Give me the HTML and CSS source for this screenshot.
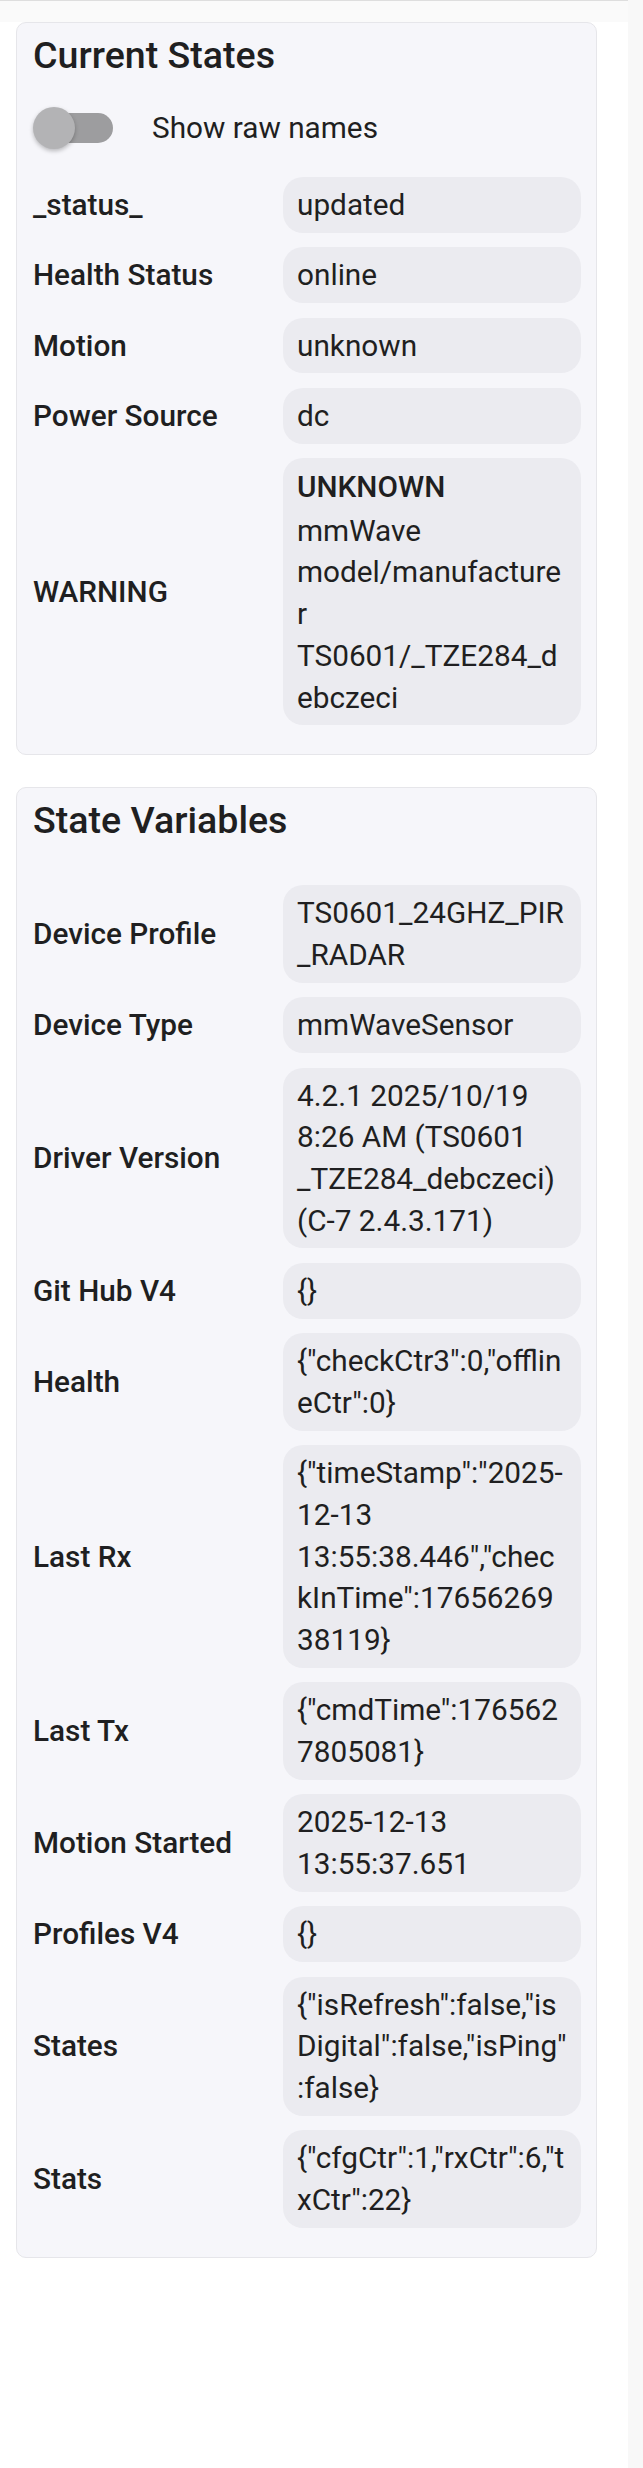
FILE: index.html
```html
<!DOCTYPE html>
<html lang="en">
<head>
<meta charset="utf-8">
<title>Device States</title>
<link rel="stylesheet" href="styles.css">
</head>
<body>
<div class="page">
  <div class="main">
    <div class="topbar"></div>
    <div class="content">
      <section class="card">
        <h2 class="card-title">Current States</h2>
        <div class="toggle-row">
          <span class="switch"><span class="switch-track"></span><span class="switch-knob"></span></span>
          <span class="toggle-label">Show raw names</span>
        </div>
        <div class="kv-grid">
          <div class="kv-label">_status_</div><div class="kv-value">updated</div>
          <div class="kv-label">Health Status</div><div class="kv-value">online</div>
          <div class="kv-label">Motion</div><div class="kv-value">unknown</div>
          <div class="kv-label">Power Source</div><div class="kv-value">dc</div>
          <div class="kv-label">WARNING</div><div class="kv-value"><strong class="kv-strong">UNKNOWN</strong>mmWave model/manufacturer TS0601/_TZE284_debczeci</div>
        </div>
      </section>
      <section class="card card-vars">
        <h2 class="card-title">State Variables</h2>
        <div class="kv-grid kv-grid-spaced">
          <div class="kv-label">Device Profile</div><div class="kv-value">TS0601_24GHZ_PIR_RADAR</div>
          <div class="kv-label">Device Type</div><div class="kv-value">mmWaveSensor</div>
          <div class="kv-label">Driver Version</div><div class="kv-value">4.2.1 2025/10/19 8:26 AM (TS0601<wbr>_TZE284_debczeci) (C-7 2.4.3.171)</div>
          <div class="kv-label">Git Hub V4</div><div class="kv-value">{}</div>
          <div class="kv-label">Health</div><div class="kv-value">{"checkCtr3":0,"offlineCtr":0}</div>
          <div class="kv-label">Last Rx</div><div class="kv-value">{"timeStamp":"2025-12-13 13:55:38.446","checkInTime":1765626938119}</div>
          <div class="kv-label">Last Tx</div><div class="kv-value">{"cmdTime":1765627805081}</div>
          <div class="kv-label">Motion Started</div><div class="kv-value">2025-12-13 13:55:37.651</div>
          <div class="kv-label">Profiles V4</div><div class="kv-value">{}</div>
          <div class="kv-label">States</div><div class="kv-value">{"isRefresh":false,"isDigital":false,"isPing":false}</div>
          <div class="kv-label">Stats</div><div class="kv-value">{"cfgCtr":1,"rxCtr":6,"txCtr":22}</div>
        </div>
      </section>
    </div>
  </div>
  <div class="scrollbar"></div>
</div>
</body>
</html>
```
FILE: styles.css
```css
* { box-sizing: border-box; }

html, body {
  margin: 0;
  padding: 0;
  background: #ffffff;
}

body {
  font-family: Roboto, "Noto Sans", "Liberation Sans", sans-serif;
  color: #1d1d1f;
  font-size: 29.75px;
  line-height: 41.7px;
}

.page {
  display: flex;
  min-height: 2468px;
}

.main {
  flex: 1;
  min-width: 0;
}

.scrollbar {
  width: 15px;
  flex: none;
  background: #f8f8f8;
}

.topbar {
  height: 22px;
  background: #fafafa;
  border-top: 1px solid #dedede;
}

.content {
  padding: 0 31px 0 16px;
}

.card {
  background: #f6f6fa;
  border: 1px solid #e6e6ea;
  border-radius: 10px;
  padding: 10px 15px 29px 16px;
}

.card-vars {
  margin-top: 32px;
}

.card-title {
  margin: 0;
  font-size: 37.6px;
  line-height: 44px;
  font-weight: 500;
  color: #1f1f21;
}

.toggle-row {
  display: flex;
  align-items: center;
  gap: 39px;
  height: 58px;
  margin: 22px 0 20px;
}

.switch {
  position: relative;
  display: block;
  width: 80px;
  height: 44px;
  flex: none;
}

.switch-track {
  position: absolute;
  left: 6px;
  top: 7px;
  width: 74px;
  height: 30px;
  border-radius: 15px;
  background: #9d9d9f;
}

.switch-knob {
  position: absolute;
  left: 0;
  top: 1px;
  width: 42px;
  height: 42px;
  border-radius: 50%;
  background: #b3b3b5;
  box-shadow: 0 2px 4px rgba(0, 0, 0, 0.25);
}

.toggle-label {
  color: #1f1f21;
}

.kv-grid {
  display: grid;
  grid-template-columns: 234px 1fr;
  column-gap: 16px;
  row-gap: 14.6px;
  align-items: center;
}

.kv-grid-spaced {
  margin-top: 43px;
}

.kv-label {
  font-weight: 500;
  color: #1f1f21;
}

.kv-value {
  background: #ebebf0;
  border-radius: 20px;
  padding: 7px 14px;
  overflow-wrap: break-word;
  min-width: 0;
  color: #1f1f21;
}

.kv-strong {
  display: block;
  font-weight: 500;
  line-height: 44.5px;
}
```
